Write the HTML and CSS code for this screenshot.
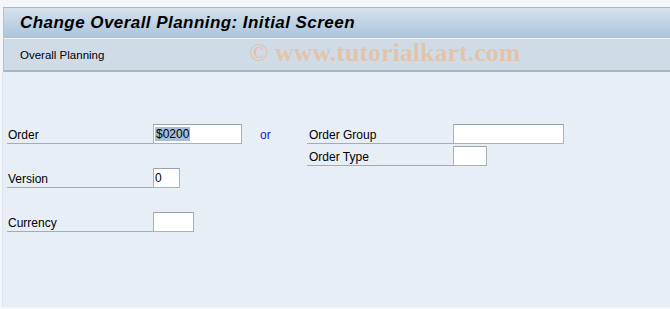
FILE: index.html
```html
<!DOCTYPE html>
<html lang="en">
<head>
    <meta charset="UTF-8">
    <title>Change Overall Planning: Initial Screen</title>
    <link rel="stylesheet" href="styles.css">
</head>
<body>

<div class="window">
    <header class="title-bar">
        <h1>Change Overall Planning: Initial Screen</h1>
    </header>

    <div class="toolbar">
        <span class="toolbar-item">Overall Planning</span>
        <span class="watermark">&copy; www.tutorialkart.com</span>
    </div>

    <main class="screen">
        <div class="form">
            <div class="col col-left">
                <div class="row">
                    <label class="field-label">Order</label>
                    <span class="field w-order"><span class="selected">$0200</span></span>
                    <span class="or">or</span>
                </div>
                <div class="row"></div>
                <div class="row">
                    <label class="field-label">Version</label>
                    <span class="field w-version">0</span>
                </div>
                <div class="row"></div>
                <div class="row">
                    <label class="field-label">Currency</label>
                    <span class="field w-currency"></span>
                </div>
            </div>

            <div class="col col-right">
                <div class="row">
                    <label class="field-label wide">Order Group</label>
                    <span class="field w-group"></span>
                </div>
                <div class="row">
                    <label class="field-label wide">Order Type</label>
                    <span class="field w-type"></span>
                </div>
            </div>
        </div>
    </main>
</div>

</body>
</html>
```

FILE: styles.css
```css
* {
    box-sizing: border-box;
}
body {
    margin: 0;
    background-color: #f4f6f9;
    font-family: 'Liberation Sans', Arial, sans-serif;
    font-size: 12px;
    color: #000;
}
.window {
    height: 309px;
    padding-top: 7px;
    display: flex;
    flex-direction: column;
}
.title-bar {
    height: 31px;
    margin-left: 3px;
    border-top: 1px solid #a9b7c7;
    border-left: 1px solid #b4c2d0;
    background: linear-gradient(#d6e2ee, #aac3da);
    padding-left: 16px;
    display: flex;
    align-items: center;
}
.title-bar h1 {
    margin: 0;
    font-size: 17px;
    font-weight: bold;
    font-style: italic;
    letter-spacing: 0.45px;
}
.toolbar {
    height: 34px;
    margin-left: 3px;
    border-top: 1px solid #eef3f8;
    border-left: 1px solid #b4c2d0;
    border-bottom: 2px solid #a7b4c2;
    background-color: #cfdce7;
    padding-left: 16px;
    display: flex;
    align-items: center;
    position: relative;
}
.toolbar-item {
    font-size: 11.5px;
}
.watermark {
    position: absolute;
    left: 245px;
    top: -1px;
    font-family: 'Liberation Serif', 'Times New Roman', serif;
    font-size: 26px;
    font-weight: bold;
    color: rgba(244, 176, 118, 0.55);
}
.screen {
    flex: 1;
    margin-left: 2px;
    margin-bottom: 2px;
    border-left: 1px solid #dfe5ec;
    background-color: #e8eef5;
    padding: 52px 0 0 4px;
}
.form {
    display: flex;
}
.col-left {
    width: 300px;
}
.row {
    height: 22px;
    display: flex;
    align-items: flex-start;
}
.field-label {
    width: 146px;
    height: 20px;
    line-height: 22px;
    padding-left: 1px;
    border-bottom: 1px solid #a3abb3;
}
.field-label.wide {
    width: 146px;
    padding-left: 2px;
}
.field {
    height: 20px;
    background-color: #fff;
    border: 1px solid #a9b1b9;
    border-top-color: #9aa2aa;
    padding: 2px 0 0 1px;
    line-height: 15px;
    font-size: 12px;
}
.selected {
    background-color: #a6bed6;
    padding: 0 1px;
}
.w-order { width: 89px; }
.w-version { width: 27px; }
.w-currency { width: 41px; }
.w-group { width: 111px; }
.w-type { width: 34px; }
.or {
    color: #1a1ad0;
    margin-left: 18px;
    line-height: 22px;
}
```
